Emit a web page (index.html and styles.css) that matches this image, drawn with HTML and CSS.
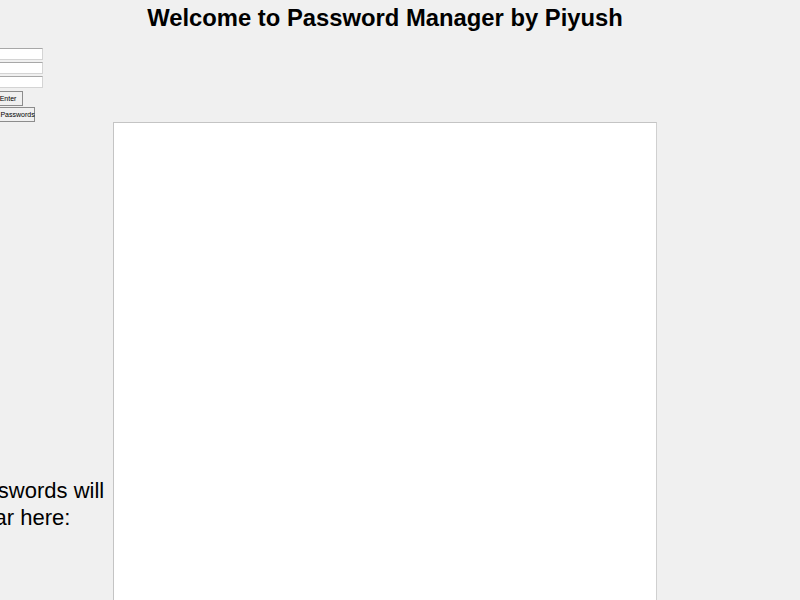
FILE: index.html
```html
<!DOCTYPE html>
<html lang="en">

<head>
    <meta charset="UTF-8">
    <meta name="viewport" content="width=device-width, initial-scale=1.0">
    <title>Password Manager</title>

    <link rel="stylesheet" href="styles.css">
</head>

<body>
    <div class="header">
        <h1>Welcome to Password Manager by Piyush</h1>
    </div>

    <div class="app">
        <div class="controls">
            <input type="text" class="entry">
            <input type="text" class="entry">
            <input type="password" class="entry">
            <button class="btn btn-enter">Enter</button>
            <button class="btn btn-show">Show Passwords</button>
        </div>
        <div class="spacer"></div>

        <div class="output-label">Your passwords will appear here:</div>
        <textarea class="output"></textarea>
    </div>
</body>

</html>
```

FILE: styles.css
```css
body {
    font-family: 'Liberation Sans', Arial, sans-serif;
    background-color: #f0f0f0;
    margin: 0;
    overflow: hidden;
}

.header {
    width: 770px;
    height: 48px;
    text-align: center;
}

.header h1 {
    margin: 0;
    padding-top: 1px;
    font-size: 23.8px;
    line-height: 34px;
    font-weight: bold;
    color: #000;
}

.app {
    display: grid;
    grid-template-columns: 113px 544px;
}

.controls {
    display: flex;
    flex-direction: column;
    align-items: flex-start;
    height: 74px;
}

.entry {
    box-sizing: border-box;
    width: 80px;
    height: 12px;
    margin: 0 0 2px -37px;
    padding: 0;
    border: 1px solid #d4d4d4;
    border-top-color: #a8a8a8;
    background-color: #fff;
}

.btn {
    box-sizing: border-box;
    height: 15px;
    padding: 0 3px;
    font-family: 'Liberation Sans', Arial, sans-serif;
    font-size: 7px;
    color: #000;
    background-color: #f0f0f0;
    border: 1px solid #8c8c8c;
    border-radius: 0;
    white-space: nowrap;
}

.btn-enter {
    width: 30px;
    margin-left: -7px;
    margin-top: 1px;
}

.btn-show {
    width: 58px;
    margin-left: -23px;
    margin-top: 1px;
}

.output-label {
    align-self: center;
    width: 200px;
    margin-left: -92px;
    font-size: 22px;
    line-height: 27px;
    text-align: center;
    color: #000;
}

.output {
    box-sizing: border-box;
    height: 764px;
    width: 544px;
    margin: 0;
    border: 1px solid #d0d0d0;
    border-top-color: #c4c4c4;
    border-left-color: #c4c4c4;
    background-color: #fff;
    resize: none;
    outline: none;
}
```
